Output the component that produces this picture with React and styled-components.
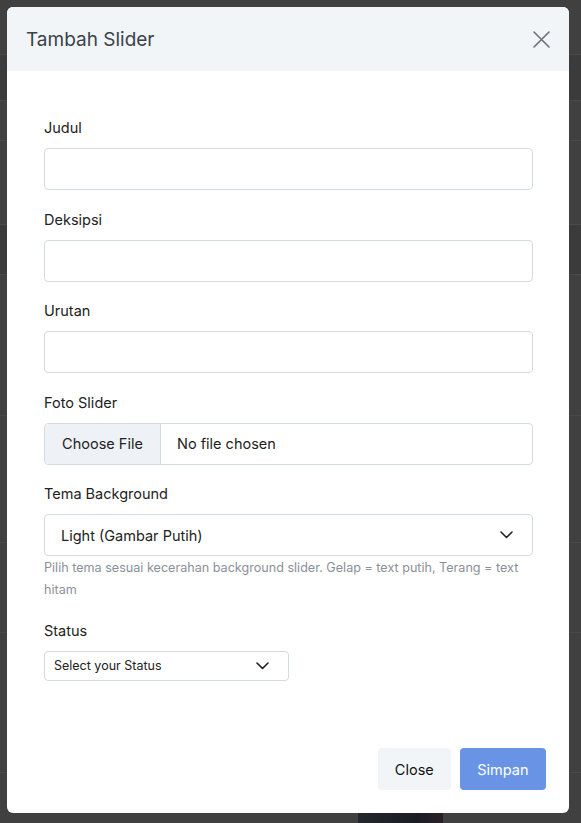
import React from "react";
import styled, { createGlobalStyle } from "styled-components";

const GlobalStyle = createGlobalStyle`
  html, body {
    margin: 0;
    padding: 0;
    background: #404040;
    font-family: "Inter", "Roboto", sans-serif;
    overflow: hidden;
  }
  * { box-sizing: border-box; }
`;

// faint page behind the backdrop
const Page = styled.div`
  height: 823px;
  display: flex;
  flex-direction: column;
`;

const PageRow = styled.div`
  height: ${(p) => p.$h}px;
  border-bottom: 1px solid #4a4a4a;
  background: ${(p) => (p.$shade ? "#3b3b3b" : "transparent")};
`;

const PageImage = styled.div`
  margin-left: 358px;
  width: 85px;
  flex: 1;
  background: linear-gradient(90deg, #23272b, #1b1d24 70%, #2a2027);
`;

const Modal = styled.div`
  position: fixed;
  top: 7px;
  left: 7px;
  width: 562px;
  height: 806px;
  background: #fff;
  border-radius: 6px;
  display: flex;
  flex-direction: column;
  overflow: hidden;
`;

const Header = styled.div`
  height: 64px;
  background: #f1f5f8;
  display: flex;
  align-items: center;
  justify-content: space-between;
  padding: 0 18px 0 19px;
`;

const Title = styled.h5`
  margin: 0;
  font-size: 19px;
  font-weight: 400;
  color: #3a424b;
`;

const CloseX = styled.button`
  border: 0;
  background: none;
  padding: 0;
  width: 20px;
  height: 20px;
  display: flex;
  align-items: center;
  justify-content: center;
  cursor: pointer;
`;

const Body = styled.div`
  flex: 1;
  padding: 46px 36px 0 37px;
  display: flex;
  flex-direction: column;
`;

const Group = styled.div`
  margin-bottom: 18.5px;
`;

const Label = styled.label`
  display: block;
  font-size: 14.5px;
  line-height: 22px;
  color: #222;
  margin-bottom: 9px;
`;

const Input = styled.input`
  display: block;
  width: 100%;
  height: 42px;
  border: 1px solid #d5d9e0;
  border-radius: 4px;
  padding: 0 16px;
  font-size: 14.5px;
  outline: none;
`;

const FileBox = styled.div`
  display: flex;
  height: 42px;
  border: 1px solid #d5d9e0;
  border-radius: 4px;
  overflow: hidden;
  font-size: 14.5px;
  color: #222;
`;

const FileButton = styled.div`
  width: 116px;
  background: #eef1f6;
  border-right: 1px solid #d5d9e0;
  display: flex;
  align-items: center;
  justify-content: center;
`;

const FileName = styled.div`
  display: flex;
  align-items: center;
  padding-left: 16px;
`;

const SelectBox = styled.div`
  display: flex;
  align-items: center;
  justify-content: space-between;
  width: ${(p) => p.$w || "100%"};
  height: ${(p) => p.$h || 42}px;
  border: 1px solid #d5d9e0;
  border-radius: 4px;
  padding: ${(p) => (p.$small ? "0 19px 0 9px" : "0 19px 0 16px")};
  font-size: ${(p) => (p.$small ? 12.5 : 14.5)}px;
  color: #222;
`;

const Help = styled.div`
  margin-top: 1px;
  font-size: 12.6px;
  line-height: 22px;
  color: #8a9099;
`;

const Footer = styled.div`
  display: flex;
  justify-content: flex-end;
  gap: 9px;
  padding: 0 23px 23px 0;
`;

const Button = styled.button`
  height: 42px;
  padding: 0 ${(p) => (p.$primary ? 17.5 : 17)}px;
  border: 0;
  border-radius: 4px;
  font-family: inherit;
  font-size: 14.5px;
  background: ${(p) => (p.$primary ? "#6994e6" : "#f1f5f8")};
  color: ${(p) => (p.$primary ? "#fff" : "#111")};
  cursor: pointer;
`;

const Chevron = () => (
  <svg width="13" height="8" viewBox="0 0 13 8" fill="none">
    <path d="M1 1l5.5 5.5L12 1" stroke="#222" strokeWidth="1.6" strokeLinecap="round" strokeLinejoin="round" />
  </svg>
);

const rows = [
  [55, false],
  [46, true],
  [40, false],
  [84, false],
  [50, true],
  [141, false],
  [127, false],
  [90, false],
  [140, false],
];

export default function App() {
  return (
    <>
      <GlobalStyle />
      <Page>
        {rows.map(([h, s], i) => (
          <PageRow key={i} $h={h} $shade={s} />
        ))}
        <PageImage />
      </Page>
      <Modal>
        <Header>
          <Title>Tambah Slider</Title>
          <CloseX aria-label="Close">
            <svg width="17" height="17" viewBox="0 0 17 17">
              <path d="M1 1l15 15M16 1L1 16" stroke="#6c7177" strokeWidth="1.6" strokeLinecap="round" />
            </svg>
          </CloseX>
        </Header>
        <Body>
          <Group>
            <Label>Judul</Label>
            <Input />
          </Group>
          <Group>
            <Label>Deksipsi</Label>
            <Input />
          </Group>
          <Group>
            <Label>Urutan</Label>
            <Input />
          </Group>
          <Group>
            <Label>Foto Slider</Label>
            <FileBox>
              <FileButton>Choose File</FileButton>
              <FileName>No file chosen</FileName>
            </FileBox>
          </Group>
          <Group>
            <Label>Tema Background</Label>
            <SelectBox>
              <span>Light (Gambar Putih)</span>
              <Chevron />
            </SelectBox>
            <Help>Pilih tema sesuai kecerahan background slider. Gelap = text putih, Terang = text hitam</Help>
          </Group>
          <Group>
            <Label>Status</Label>
            <SelectBox $small $w="245px" $h={30}>
              <span>Select your Status</span>
              <Chevron />
            </SelectBox>
          </Group>
        </Body>
        <Footer>
          <Button>Close</Button>
          <Button $primary>Simpan</Button>
        </Footer>
      </Modal>
    </>
  );
}
